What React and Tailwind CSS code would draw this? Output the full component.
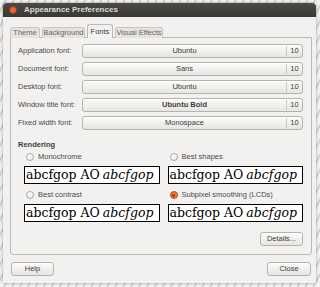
const LABEL = 'text-[7.5px] leading-[10px] text-[#4a4a48]'

const fontRows = [
  { label: 'Application font:', name: 'Ubuntu', size: 10 },
  { label: 'Document font:', name: 'Sans', size: 10 },
  { label: 'Desktop font:', name: 'Ubuntu', size: 10 },
  { label: 'Window title font:', name: 'Ubuntu Bold', size: 10, bold: true },
  { label: 'Fixed width font:', name: 'Monospace', size: 10 },
]

const tabs = [
  { label: 'Theme', w: 'w-[30px]' },
  { label: 'Background', w: 'w-[43px]' },
  { label: 'Fonts', w: 'w-[26px]', active: true },
  { label: 'Visual Effects', w: 'w-[48px]' },
]

const BTN =
  'rounded-[3px] border border-[#b6b3ae] bg-linear-to-b from-[#fbfbfa] to-[#e7e5e2] shadow-[inset_0_1px_0_#ffffff]'

function Radio({ checked }) {
  if (checked) {
    return (
      <span className="grid h-[8px] w-[8px] shrink-0 place-items-center rounded-full border border-[#c2521f] bg-[#ef7440]">
        <span className="h-[3px] w-[3px] rounded-full bg-[#a8400f]" />
      </span>
    )
  }
  return (
    <span className="h-[8px] w-[8px] shrink-0 rounded-full border border-[#aaa7a2] bg-linear-to-b from-[#ffffff] to-[#ecebe9]" />
  )
}

function Preview() {
  return (
    <div className="mt-[2px] flex h-[18px] items-center overflow-hidden whitespace-nowrap border border-black bg-white pl-[1px] font-['DejaVu_Serif',serif] text-[12.5px] leading-[16px] text-black">
      abcfgop AO <span className="ml-[3px] italic">abcfgop</span>
    </div>
  )
}

function RenderOption({ label, checked }) {
  return (
    <div>
      <div className="flex h-[14px] items-center gap-[4px] pl-[2px]">
        <Radio checked={checked} />
        <span className={LABEL}>{label}</span>
      </div>
      <Preview />
    </div>
  )
}

export default function App() {
  return (
    <div className="h-[287px] w-[320px] overflow-hidden bg-[#e9e9e9] bg-[repeating-linear-gradient(118deg,#f3f3f3_0px,#f3f3f3_4px,#c9c9c9_5px,#f3f3f3_7px)] pt-[3px] pl-[3px] font-['Liberation_Sans',sans-serif]">
      <div className="flex h-[280px] w-[313px] flex-col shadow-[0_0_3px_rgba(0,0,0,0.35)]">
        {/* Title bar */}
        <div className="flex h-[14px] items-center rounded-t-[4px] bg-linear-to-b from-[#4b4a46] to-[#393834]">
          <span className="ml-[6px] h-[8px] w-[8px] rounded-full border border-[#9b3a16] bg-[#e9643a]" />
          <span className="ml-[7px] text-[8px] font-bold leading-[10px] text-[#dfdbd2]">
            Appearance Preferences
          </span>
        </div>

        {/* Body */}
        <div className="flex flex-1 flex-col bg-[#f2f1f0] pt-[7px] pl-[7px] pr-[4px]">
          {/* Tabs */}
          <div className="relative z-10 -mb-px flex h-[14px] items-end gap-[2px]">
            {tabs.map((t) =>
              t.active ? (
                <div
                  key={t.label}
                  className={`${t.w} flex h-[14px] items-start justify-center rounded-t-[3px] border border-b-0 border-[#bdb9b3] bg-[#f2f1f0] pt-[2px] text-[7.5px] leading-[10px] text-[#3c3c3a]`}
                >
                  {t.label}
                </div>
              ) : (
                <div
                  key={t.label}
                  className={`${t.w} flex h-[11px] items-center justify-center whitespace-nowrap rounded-t-[3px] border border-b-0 border-[#c9c5c0] bg-[#e6e3df] text-[7.5px] leading-[10px] text-[#666662]`}
                >
                  {t.label}
                </div>
              ),
            )}
          </div>

          {/* Notebook page */}
          <div className="flex h-[218px] flex-col rounded-b-[3px] border border-[#bdb9b3] bg-[#f2f1f0] pt-[6px] pl-[7px] pr-[8px]">
            <div className="flex flex-col gap-[4px]">
              {fontRows.map((r) => (
                <div key={r.label} className="flex h-[14px] items-center">
                  <span className={`${LABEL} w-[64px] shrink-0`}>{r.label}</span>
                  <div className={`${BTN} flex h-[14px] flex-1 items-center`}>
                    <span
                      className={`flex-1 text-center text-[7.5px] leading-[10px] text-[#3c3c3a] ${r.bold ? 'font-bold' : ''}`}
                    >
                      {r.name}
                    </span>
                    <span className="h-[10px] border-l border-[#cbc8c3]" />
                    <span className="w-[15px] text-center text-[7.5px] leading-[10px] text-[#3c3c3a]">
                      {r.size}
                    </span>
                  </div>
                </div>
              ))}
            </div>

            <div className="mt-[10px] text-[7.5px] font-bold leading-[10px] text-[#3c3c3a]">Rendering</div>

            <div className="ml-[6px] grid grid-cols-2 gap-x-[8px] gap-y-[4px]">
              <RenderOption label="Monochrome" />
              <RenderOption label="Best shapes" />
              <RenderOption label="Best contrast" />
              <RenderOption label="Subpixel smoothing (LCDs)" checked />
            </div>

            <div className="mt-[10px] flex justify-end">
              <button
                type="button"
                className={`${BTN} h-[14px] w-[43px] text-[7.5px] leading-[10px] text-[#3c3c3a]`}
              >
                Details...
              </button>
            </div>
          </div>

          {/* Dialog buttons */}
          <div className="mt-[7px] flex justify-between pl-[1px] pr-[1px]">
            <button
              type="button"
              className={`${BTN} h-[14px] w-[43px] text-[7.5px] leading-[10px] text-[#3c3c3a]`}
            >
              Help
            </button>
            <button
              type="button"
              className={`${BTN} h-[14px] w-[44px] text-[7.5px] leading-[10px] text-[#3c3c3a]`}
            >
              Close
            </button>
          </div>
        </div>
      </div>
    </div>
  )
}
